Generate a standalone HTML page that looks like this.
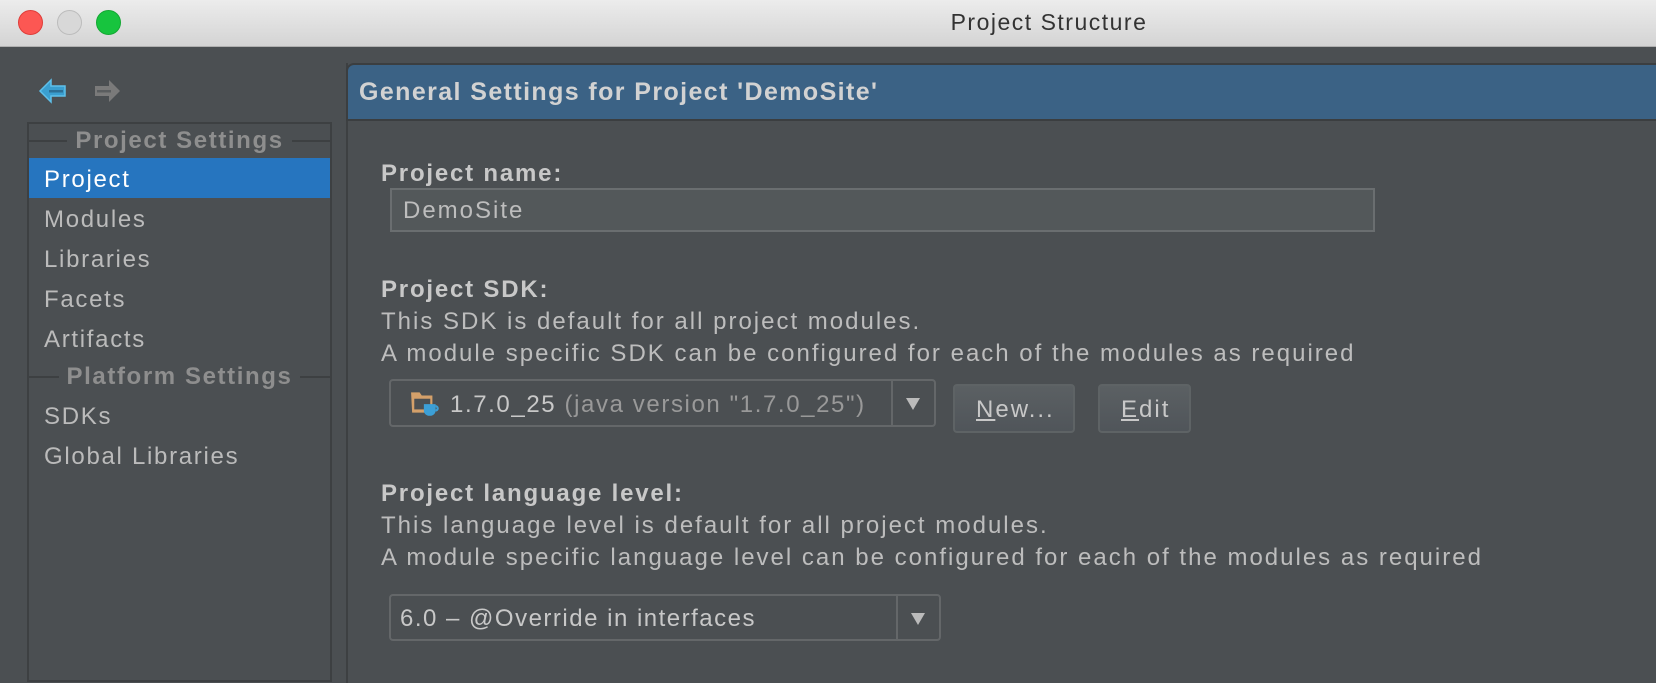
<!DOCTYPE html>
<html><head><style>
*{margin:0;padding:0;box-sizing:border-box}
body{width:1656px;height:678px;overflow:hidden;background:#4b4f52;font-family:"Liberation Sans",sans-serif;position:relative;color:#bbbbbb}
.a{position:absolute;white-space:nowrap}
.title{left:0;top:0;width:1656px;height:47px;background:linear-gradient(#ececec,#d4d4d4);border-bottom:1px solid #b0b0b0}
.dot{position:absolute;width:25px;height:25px;border-radius:50%;top:10px}
.t{font-size:24px;line-height:28px;letter-spacing:1.7px}
.b{font-weight:bold}
.lbl{font-size:24px;font-weight:bold;color:#c8c8c8;letter-spacing:1.8px}
.txt{font-size:24px;color:#bdbdbd;letter-spacing:2px}
</style></head><body>
<div class="a title"></div>
<div class="dot" style="left:18px;background:#fc5753;border:1px solid #df3d39"></div>
<div class="dot" style="left:57px;background:#d8d8d8;border:1px solid #bcbcbc"></div>
<div class="dot" style="left:96px;background:#17c43e;border:1px solid #13a833"></div>
<div class="a" style="left:0;width:1656px;top:9px;text-align:center;padding-left:442px;font-size:23px;letter-spacing:1.5px;color:#333">Project Structure</div>

<svg class="a" style="left:38px;top:77px" width="30" height="28" viewBox="0 0 30 28"><path d="M2 14 L13 3 L13 9 L27 9 L27 19 L13 19 L13 25 Z" fill="#3a9fd0" stroke="#5ec0ea" stroke-width="1.5"/><rect x="11" y="13" width="14" height="2.5" fill="#2d6f95"/></svg>
<svg class="a" style="left:92px;top:77px" width="30" height="28" viewBox="0 0 30 28"><path d="M28 14 L17 3 L17 9 L3 9 L3 19 L17 19 L17 25 Z" fill="#7a7a7a"/><rect x="5" y="13" width="14" height="2.5" fill="#5a5d5f"/></svg>

<div class="a" style="left:27px;top:122px;width:305px;height:560px;border:2px solid #3d4042"></div>
<div class="a" style="left:29px;top:140px;width:301px;height:2px;background:#3d4042"></div>
<div class="a" style="left:29px;top:127px;width:301px;text-align:center"><span class="b" style="padding:0 8px;background:#4b4f52;font-size:24px;letter-spacing:1.6px;color:#8e8e8e">Project Settings</span></div>
<div class="a" style="left:29px;top:158px;width:301px;height:40px;background:#2675bf"></div>
<div class="a t" style="left:44px;top:166px;color:#fff">Project</div>
<div class="a t" style="left:44px;top:206px">Modules</div>
<div class="a t" style="left:44px;top:246px">Libraries</div>
<div class="a t" style="left:44px;top:286px">Facets</div>
<div class="a t" style="left:44px;top:326px">Artifacts</div>
<div class="a" style="left:29px;top:376px;width:301px;height:2px;background:#3d4042"></div>
<div class="a" style="left:29px;top:363px;width:301px;text-align:center"><span class="b" style="padding:0 8px;background:#4b4f52;font-size:24px;letter-spacing:1.6px;color:#8e8e8e">Platform Settings</span></div>
<div class="a t" style="left:44px;top:403px">SDKs</div>
<div class="a t" style="left:44px;top:443px">Global Libraries</div>

<div class="a" style="left:346px;top:63px;width:2px;height:620px;background:#3d4042"></div>
<div class="a" style="left:346px;top:63px;width:1310px;height:58px;background:#3b6285;border-top-left-radius:8px;border-top:2px solid #3b3e40;border-left:2px solid #3b3e40;border-bottom:2px solid #3b3e40"></div>
<div class="a b" style="left:359px;top:78px;font-size:25px;letter-spacing:1.4px;color:#d2d2d2">General Settings for Project 'DemoSite'</div>

<div class="a lbl" style="left:381px;top:160px">Project name:</div>
<div class="a" style="left:390px;top:188px;width:985px;height:44px;background:#53585a;border:2px solid #6a6e70"></div>
<div class="a txt" style="left:403px;top:197px">DemoSite</div>

<div class="a lbl" style="left:381px;top:276px">Project SDK:</div>
<div class="a txt" style="left:381px;top:308px">This SDK is default for all project modules.</div>
<div class="a txt" style="left:381px;top:340px">A module specific SDK can be configured for each of the modules as required</div>

<div class="a" style="left:389px;top:379px;width:547px;height:48px;border:2px solid #646769;border-radius:4px;background:#4b4f52"></div>
<div class="a" style="left:891px;top:381px;width:2px;height:44px;background:#646769"></div>
<svg class="a" style="left:410px;top:388px" width="32" height="30" viewBox="0 0 30 28"><path d="M1 4 h8 l2 3 h10 v16 h-19z" fill="#d4a06a"/><rect x="4" y="10" width="15" height="10" fill="#4b4f52"/><path d="M13 15 h11 v6 a5 5 0 0 1 -5 5 h-1 a5 5 0 0 1 -5 -5z" fill="#3c9fd6"/><path d="M24 17 a2 2 0 0 1 0 4" stroke="#3c9fd6" stroke-width="2" fill="none"/></svg>
<div class="a" style="left:450px;top:391px;font-size:24px;letter-spacing:1.6px"><span style="color:#c8c8c8">1.7.0_25</span> <span style="color:#999">(java version "1.7.0_25")</span></div>
<svg class="a" style="left:905px;top:395px" width="16" height="16"><path d="M1 3 h14 l-7 12z" fill="#bbb"/></svg>

<div class="a" style="left:953px;top:384px;width:122px;height:49px;border:2px solid #5e6365;border-radius:4px;background:linear-gradient(#5b6063,#50555a)"></div>
<div class="a txt" style="left:976px;top:396px;color:#c8c8c8"><u>N</u>ew...</div>
<div class="a" style="left:1098px;top:384px;width:93px;height:49px;border:2px solid #5e6365;border-radius:4px;background:linear-gradient(#5b6063,#50555a)"></div>
<div class="a txt" style="left:1121px;top:396px;color:#c8c8c8"><u>E</u>dit</div>

<div class="a lbl" style="left:381px;top:480px">Project language level:</div>
<div class="a txt" style="left:381px;top:512px">This language level is default for all project modules.</div>
<div class="a txt" style="left:381px;top:544px">A module specific language level can be configured for each of the modules as required</div>

<div class="a" style="left:389px;top:594px;width:552px;height:47px;border:2px solid #646769;border-radius:4px"></div>
<div class="a" style="left:896px;top:596px;width:2px;height:43px;background:#646769"></div>
<div class="a txt" style="left:400px;top:605px;color:#c8c8c8;letter-spacing:1.5px">6.0 – @Override in interfaces</div>
<svg class="a" style="left:910px;top:610px" width="16" height="16"><path d="M1 3 h14 l-7 12z" fill="#bbb"/></svg>
</body></html>
